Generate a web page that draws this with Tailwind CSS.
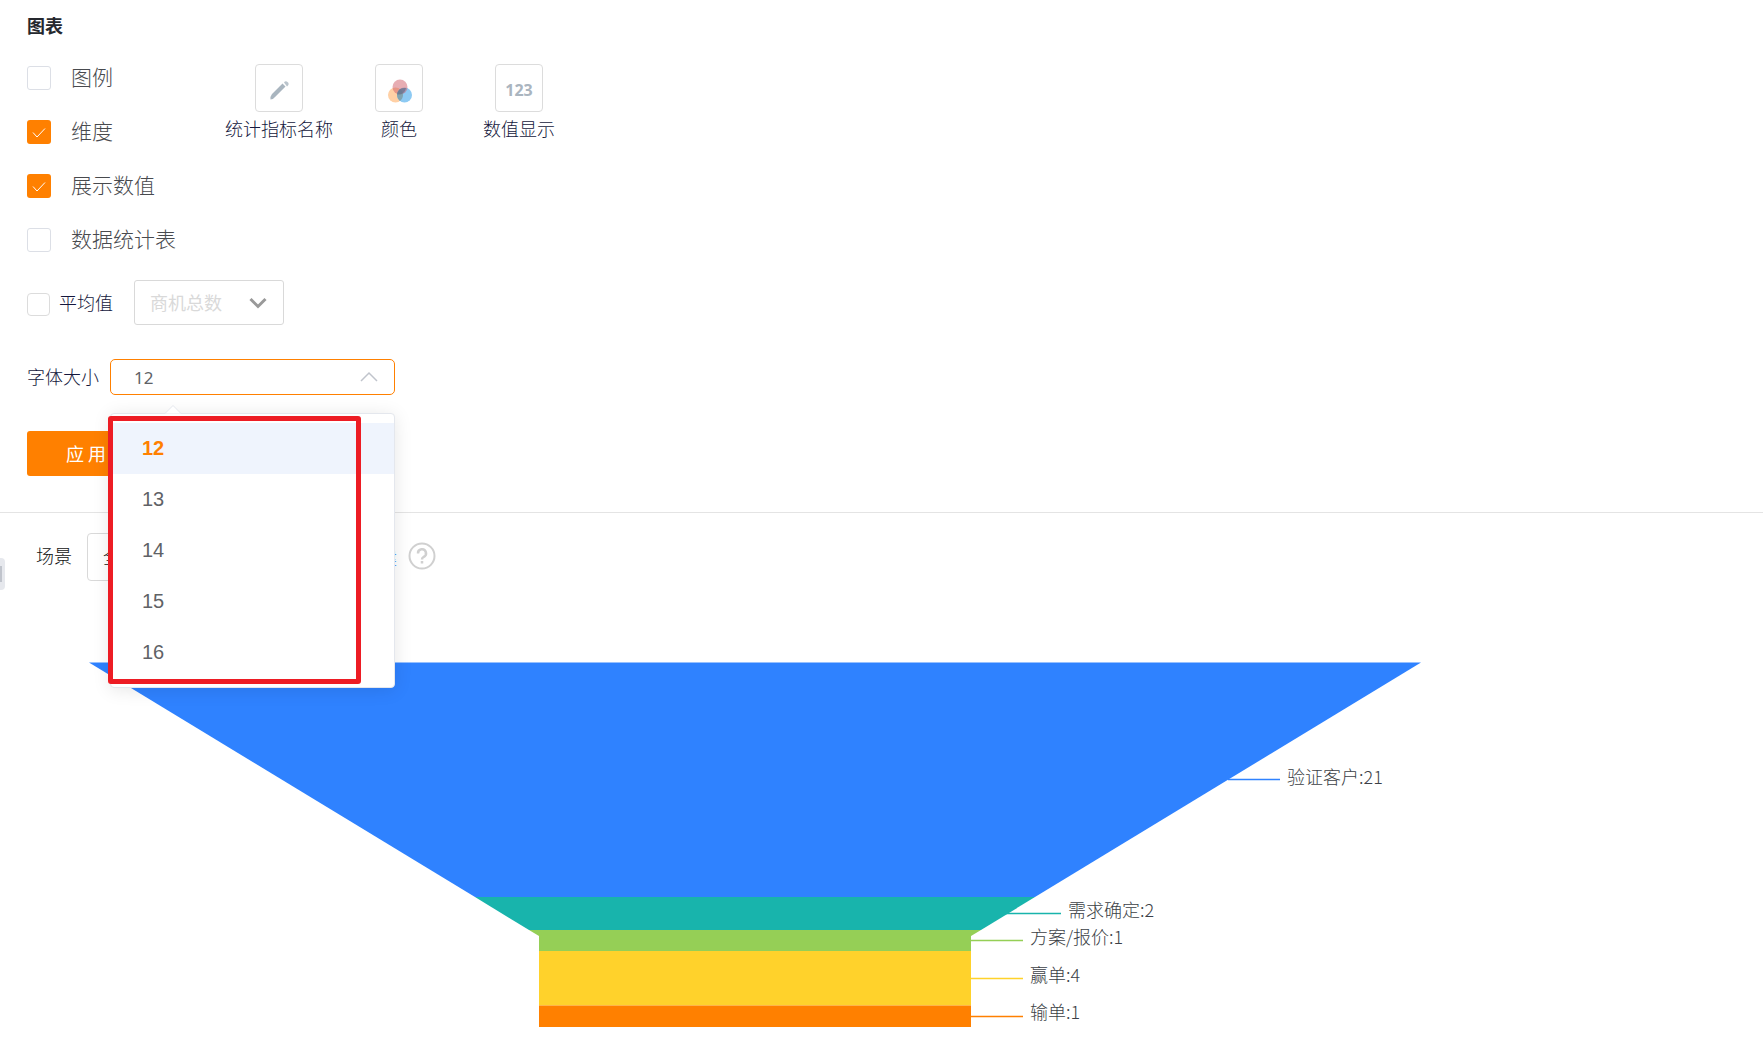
<!DOCTYPE html>
<html lang="zh-CN">
<head>
    <meta charset="UTF-8">
    <meta name="viewport" content="width=device-width, initial-scale=1.0">
    <title>图表</title>
    <script src="https://cdn.jsdelivr.net/npm/@tailwindcss/browser@4"></script>
</head>

<body class="relative overflow-x-hidden bg-white font-['Noto_Sans_CJK_SC',sans-serif] text-lg leading-6 font-light text-[#14173c]">
    <form class="border-b border-[#e4e4e4] pt-[13px] pb-9 pl-[27px]" onsubmit="return false">
        <h1 class="font-bold text-[#25282e]">图表</h1>

        <div class="mt-[25px] flex">
            <div class="flex w-[197px] flex-col gap-6 pt-px text-[21px] leading-[26px] text-[#484a4e]">
                <label class="flex items-center gap-5">
                    <input type="checkbox" class="size-6 appearance-none rounded-[3px] border border-[#dcdfe6]">
                    <span class="pb-1">图例</span>
                </label>
                <label class="flex items-center gap-5">
                    <span class="grid size-6">
                        <input type="checkbox" checked class="col-start-1 row-start-1 appearance-none rounded-[3px] bg-[#ff8000]">
                        <svg class="col-start-1 row-start-1 size-6" viewBox="0 0 24 24" fill="none" stroke="#fff"><path d="M6 12.5l4 4.500 8-8.500"/></svg>
                    </span>
                    <span class="pb-1">维度</span>
                </label>
                <label class="flex items-center gap-5">
                    <span class="grid size-6">
                        <input type="checkbox" checked class="col-start-1 row-start-1 appearance-none rounded-[3px] bg-[#ff8000]">
                        <svg class="col-start-1 row-start-1 size-6" viewBox="0 0 24 24" fill="none" stroke="#fff"><path d="M6 12.5l4 4.500 8-8.500"/></svg>
                    </span>
                    <span class="pb-1">展示数值</span>
                </label>
                <label class="flex items-center gap-5">
                    <input type="checkbox" class="size-6 appearance-none rounded-[3px] border border-[#dcdfe6]">
                    <span class="pb-1">数据统计表</span>
                </label>
            </div>

            <!-- Style shortcuts -->
            <div class="flex items-start pt-0.5">
                <button type="button" class="flex w-[110px] flex-col items-center gap-1">
                    <span class="flex size-12 items-center justify-center rounded border border-[#dcdcdc] pt-1">
                        <svg class="size-6" viewBox="0 0 24 24" fill="#a9b5bf"><path d="M3.500 21.500q-.5-3 1.500-5.500L15.500 5.500l3 3L8 19q-2 2.500-4.500 2.500z"/><path d="M17 4.500q1.500-2 3.500-.500t.500 3.500l-1 1z" opacity=".8"/></svg>
                    </span>
                    统计指标名称
                </button>
                <button type="button" class="flex w-[130px] flex-col items-center gap-1">
                    <span class="flex size-12 items-center justify-center rounded border border-[#dcdcdc] pt-1.5 pl-0.5">
                        <svg class="size-7" viewBox="0 0 28 28">
                            <circle cx="9.500" cy="18" r="7.500" fill="#ffd0a5"/>
                            <circle cx="18.500" cy="18" r="7.500" fill="#8dcaf3"/>
                            <circle cx="14" cy="10" r="7.500" fill="#cf5b68" opacity=".5"/>
                            <path d="M14 12a7.500 7.500 0 0 1 0 12a7.500 7.500 0 0 1 0-12z" fill="#7d9aa0" opacity=".8"/>
                            <path d="M14 12q3-1.500 6-1a7.500 7.500 0 0 1-9 6.400q.5-3 3-5.400z" fill="#62718c" opacity=".7"/>
                        </svg>
                    </span>
                    颜色
                </button>
                <button type="button" class="flex w-[110px] flex-col items-center gap-1">
                    <span class="flex size-12 items-center justify-center rounded border border-[#dcdcdc] pt-1 font-['Noto_Sans',sans-serif] text-base font-bold text-[#aab5bf]">123</span>
                    数值显示
                </button>
            </div>
        </div>

        <div class="mt-[25px] flex items-center">
            <label class="flex items-center gap-[9px]">
                <input type="checkbox" class="mt-1 size-[23px] appearance-none rounded border border-[#dcdcdc]">
                <span class="pb-0.5">平均值</span>
            </label>
            <div class="ml-[21px] grid w-[150px] items-center">
                <select aria-label="平均值指标" disabled class="col-start-1 row-start-1 h-[45px] appearance-none rounded-[3px] border border-[#d9d9d9] pb-0.5 pl-[15px] font-normal text-[#d9d9d9]">
                    <option>商机总数</option>
                </select>
                <svg class="col-start-1 row-start-1 mr-4 h-4 w-5 justify-self-end" viewBox="0 0 20 16" fill="none" stroke="#999" stroke-width="3"><path d="M2.500 4l7.500 7.500L17.500 4"/></svg>
            </div>
        </div>

        <div class="mt-[34px] flex items-center gap-[11px]">
            <label for="font-size" class="pb-0.5">字体大小</label>
            <div class="relative w-[285px]">
                <input id="font-size" type="text" value="12" readonly class="block h-9 w-full rounded-[5px] border border-[#ff8000] pl-[23px] font-['Noto_Sans',sans-serif] text-[17px] font-normal text-[#606266] outline-none">
                <svg class="absolute top-3 right-[17px] h-3 w-[18px]" viewBox="0 0 18 12" fill="none" stroke="#c0c4cc" stroke-width="1.500"><path d="M1 10l8-8 8 8"/></svg>

                <!-- Open option list -->
                <div class="absolute top-[54px] left-0 z-10 w-full rounded border border-[#e4e7ed] bg-white py-[9px] font-['Liberation_Sans',sans-serif] text-xl font-normal text-[#606266] shadow-[0_2px_18px_rgba(0,0,0,0.1)]">
                    <svg class="absolute -top-[9px] left-[54px] h-[9px] w-4" viewBox="0 0 16 9" fill="#fff" stroke="#e4e7ed"><path d="M0 8.500l8-8 8 8"/></svg>
                    <ul role="listbox" class="leading-[51px]">
                        <li role="option" aria-selected="true" class="bg-[#eff4fd] pl-[31px] font-bold text-[#ff8000]">12</li>
                        <li role="option" class="pl-[31px]">13</li>
                        <li role="option" class="pl-[31px]">14</li>
                        <li role="option" class="pl-[31px]">15</li>
                        <li role="option" class="pl-[31px]">16</li>
                    </ul>
                    <div class="pointer-events-none absolute top-[2px] -left-[3px] h-[268px] w-[253px] rounded-[3px] border-5 border-[#ed1c24]"></div>
                </div>
            </div>
        </div>

        <button type="button" class="mt-9 block h-[45px] rounded-[3px] bg-[#ff8000] px-[39px] pb-0.5 font-normal text-white">应 用</button>
    </form>

    <div class="mt-5 flex items-center pl-9 text-[#111]">
        <label for="scene" class="pb-1">场景</label>
        <select id="scene" class="ml-[15px] h-12 w-[200px] appearance-none rounded border border-[#d9d9d9] pb-0.5 pl-[15px]">
            <option>全部</option>
        </select>
        <a href="#" class="ml-[74px] text-[#2f82ff]">新建</a>
        <button type="button" aria-label="帮助" class="ml-[11px] pb-0.5">
            <svg class="size-7" viewBox="0 0 28 28" fill="none" stroke="#d0d0d0" stroke-width="2"><circle cx="14" cy="14" r="12.500"/><path d="M10 11.500a4 4 0 1 1 5.500 3.500q-1.500.8-1.500 2.500M14 19v2.500" stroke-width="2.500"/></svg>
        </button>
    </div>

    <svg class="mt-[71px] block w-full" viewBox="0 0 1763 385" role="img" aria-label="销售漏斗" font-size="18" fill="#3c3f46">
        <path d="M89 10.500H1421L1035 245H475z" fill="#2f82ff"/>
        <path d="M475 245H1035L981 278H529z" fill="#18b4ac"/>
        <path d="M529 278H981L971 284V299H539V284z" fill="#95cf56"/>
        <path d="M539 299H971V353.500H539z" fill="#ffd22b"/>
        <path d="M539 353.500H971V375H539z" fill="#ff8000"/>
        <g fill="none" stroke-width="1.500">
            <path d="M1228 127.500H1280" stroke="#2f82ff"/>
            <path d="M1006 261.500H1061" stroke="#18b4ac"/>
            <path d="M971 288.500H1023" stroke="#95cf56"/>
            <path d="M971 326.500H1023" stroke="#ffd22b"/>
            <path d="M971 364.500H1023" stroke="#ff8000"/>
        </g>
        <text x="1287" y="132">验证客户:21</text>
        <text x="1068" y="265">需求确定:2</text>
        <text x="1030" y="292">方案/报价:1</text>
        <text x="1030" y="330">赢单:4</text>
        <text x="1030" y="367">输单:1</text>
    </svg>

    <!-- Sidebar collapse handle -->
    <button type="button" aria-label="展开" class="absolute top-[558px] left-0 flex h-8 w-[5px] items-center rounded-r bg-[#e6e8ed]">
        <span class="h-4 w-0.5 bg-[#c0c4cc]"></span>
    </button>
</body>
</html>
